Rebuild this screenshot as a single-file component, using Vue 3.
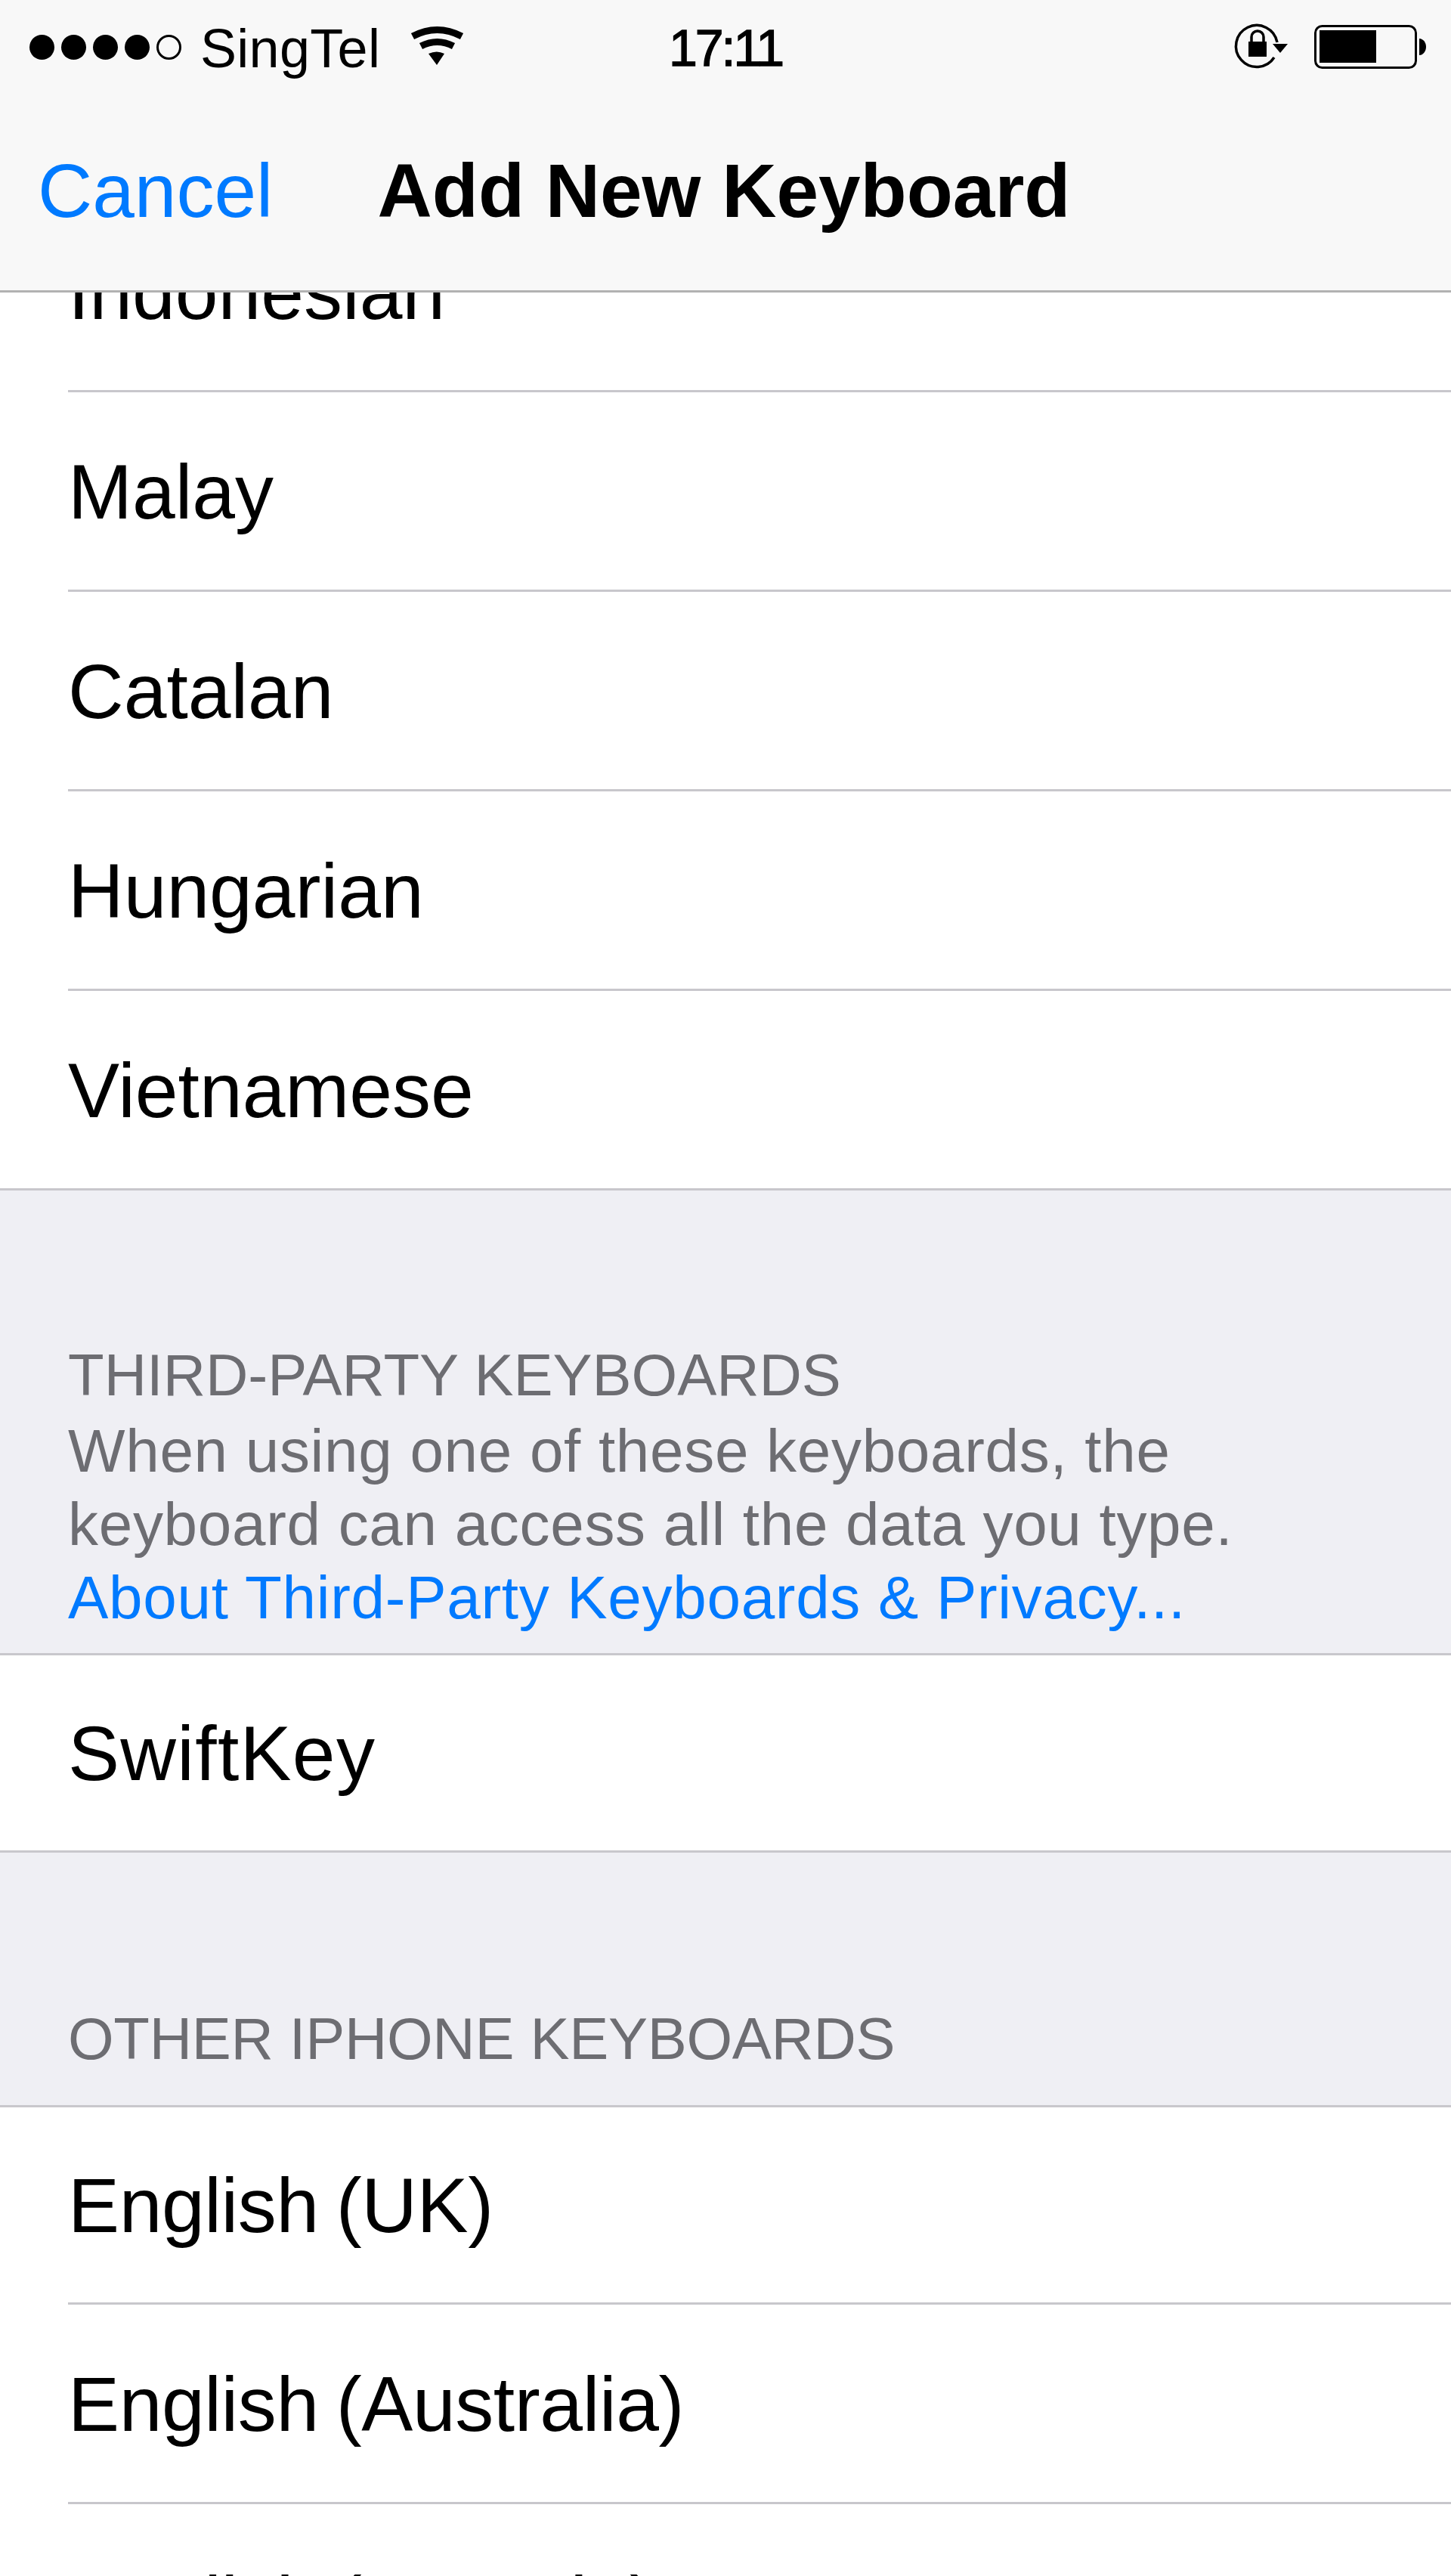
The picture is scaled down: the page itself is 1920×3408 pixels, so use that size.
<script setup>
const topRows = ['Indonesian', 'Malay', 'Catalan', 'Hungarian', 'Vietnamese']
const otherRows = ['English (UK)', 'English (Australia)', 'English (Canada)']
</script>

<template>
  <div class="screen">
    <header class="header">
      <div class="status">
        <div class="status-left">
          <div class="signal">
            <span v-for="n in 4" :key="n" class="dot"></span>
            <span class="dot empty"></span>
          </div>
          <span class="carrier">SingTel</span>
          <svg class="wifi" width="80" height="60" viewBox="0 0 80 60">
            <path d="M8 20Q40.5 3 73 20" fill="none" stroke="#000" stroke-width="9" />
            <path d="M19 33Q40.5 22 62 33" fill="none" stroke="#000" stroke-width="9" />
            <path d="M29 43Q40 38 50 43L40 58Z" fill="#000" />
          </svg>
        </div>
        <div class="time">17:11</div>
        <div class="status-right">
          <svg width="80" height="70" viewBox="0 0 80 70">
            <path d="M57 51A27.5 27.5 0 1 1 61 31" fill="none" stroke="#000" stroke-width="3.5" />
            <path d="M55 33H75L65 45Z" fill="#000" />
            <rect x="23" y="30" width="24" height="20" fill="#000" />
            <path d="M27 31V24a8 8 0 0 1 16 0V31" fill="none" stroke="#000" stroke-width="3.5" />
          </svg>
          <svg class="battery" width="150" height="60" viewBox="0 0 150 60">
            <rect x="2.5" y="2.5" width="133" height="55" rx="9" fill="none" stroke="#000" stroke-width="3" />
            <rect x="8" y="8" width="75" height="43" fill="#000" />
            <path d="M140 19c5 0 9 5 9 11s-4 11-9 11Z" fill="#000" />
          </svg>
        </div>
      </div>
      <div class="nav">
        <span class="cancel">Cancel</span>
        <span class="title">Add New Keyboard</span>
      </div>
    </header>

    <main class="list">
      <section class="group">
        <div v-for="name in topRows" :key="name" class="row plain"><span class="row-inner">{{ name }}</span></div>
      </section>

      <div class="section-head third">
        <div class="caps">THIRD-PARTY KEYBOARDS</div>
        <div class="note">When using one of these keyboards, the<br>keyboard can access all the data you type.</div>
        <div class="note link">About Third-Party Keyboards &amp; Privacy...</div>
      </div>
      <section class="group bordered">
        <div class="row swift"><span class="row-inner">SwiftKey</span></div>
      </section>

      <div class="section-head other">
        <div class="caps">OTHER IPHONE KEYBOARDS</div>
      </div>
      <section class="group bordered">
        <div v-for="name in otherRows" :key="name" class="row"><span class="row-inner">{{ name }}</span></div>
      </section>
    </main>
  </div>
</template>

<style>
html, body {
  margin: 0;
  background: #fff;
}
</style>

<style scoped>
* {
  box-sizing: border-box;
}

.screen {
  width: 1920px;
  height: 3408px;
  overflow: hidden;
  background: #efeff4;
  font-family: "Liberation Sans", Arial, sans-serif;
  color: #000;
}

.header {
  position: relative;
  z-index: 1;
  height: 387px;
  background: #f8f8f8;
  border-bottom: 3px solid #b2b2b2;
}

.status {
  display: grid;
  grid-template-columns: 1fr auto 1fr;
  grid-template-rows: 120px;
  align-items: center;
  height: 120px;
  font-size: 72px;
  line-height: 120px;
}

.status-left {
  display: flex;
  align-items: center;
  padding-left: 39px;
}

.signal {
  display: flex;
  gap: 9px;
  margin-top: 4px;
}

.dot {
  width: 33px;
  height: 33px;
  border-radius: 50%;
  background: #000;
}

.dot.empty {
  background: none;
  border: 3px solid #000;
}

.carrier {
  margin-left: 25px;
  margin-top: 8px;
  letter-spacing: 0.3px;
}

.wifi {
  margin-left: 35px;
  margin-bottom: 5px;
}

.time {
  margin-top: 6px;
  font-size: 68px;
  letter-spacing: -3px;
  -webkit-text-stroke: 1.4px #000;
}

.status-right {
  display: flex;
  align-items: center;
  justify-content: flex-end;
  gap: 29px;
  padding-right: 32px;
}

.battery {
  margin-top: 3px;
}

.nav {
  display: grid;
  grid-template-columns: 1fr auto 1fr;
  align-items: center;
  height: 264px;
  padding-right: 4px;
  font-size: 100px;
  line-height: 264px;
}

.cancel {
  margin-left: 50px;
  color: #007aff;
}

.title {
  font-weight: 700;
}

.list {
  margin-top: -132px;
}

.group {
  background: #fff;
}

.group.bordered {
  border-top: 3px solid #c8c7cc;
}

.row {
  height: 264px;
  padding-left: 90px;
  font-size: 102px;
  letter-spacing: -0.4px;
  word-spacing: -5px;
}

.row.plain {
  letter-spacing: 0;
}

.row-inner {
  display: block;
  height: 100%;
  padding-top: 2px;
  line-height: 261px;
  border-bottom: 3px solid #c8c7cc;
}

.row:last-child {
  padding-left: 0;
}

.row:last-child .row-inner {
  padding-left: 90px;
}

/* first row under a section header is shorter, its top line counts */
.bordered .row:first-child {
  height: 261px;
}

.bordered .row:first-child .row-inner {
  padding-top: 1px;
  line-height: 258px;
}

.swift {
  letter-spacing: 1.3px;
}

.section-head {
  padding: 0 90px;
  color: #6d6d72;
}

.third {
  padding-top: 193px;
  padding-bottom: 25px;
}

.other {
  padding-top: 195px;
  padding-bottom: 36px;
}

.caps {
  font-size: 78px;
  line-height: 103px;
}

.other .caps {
  letter-spacing: -0.3px;
}

.note {
  font-size: 80px;
  line-height: 97px;
  letter-spacing: 0.7px;
}

.link {
  color: #007aff;
}
</style>
